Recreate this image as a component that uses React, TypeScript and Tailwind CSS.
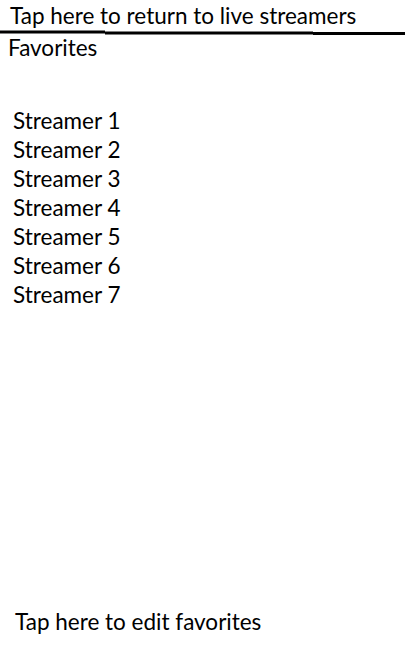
const streamers = [1, 2, 3, 4, 5, 6, 7];

export default function App() {
  return (
    <div className="h-[655px] w-[405px] bg-white text-black flex flex-col" style={{ fontFamily: "Lato, 'Open Sans', sans-serif" }}>
      <div className="pl-[10px] pt-[2px] text-[22.5px] leading-[28px]">Tap here to return to live streamers</div>
      {/* hand-drawn divider, slightly sloped */}
      <svg className="block mt-[0px]" width="405" height="5" viewBox="0 0 405 5">
        <polygon points="0,0.5 105,0.5 105,1.5 313,1.5 313,2 405,2 405,5 313,5 313,4.5 105,4.5 105,3.5 0,3.5" fill="black" />
      </svg>
      <div className="pl-[8px] text-[22.5px] leading-[26px]">Favorites</div>

      <ul className="pl-[13px] mt-[45px] text-[22.5px] leading-[29px]">
        {streamers.map((n) => (
          <li key={n}>Streamer {n}</li>
        ))}
      </ul>

      <div className="mt-auto pl-[15px] pb-[19px] text-[22.5px] leading-[28px]">Tap here to edit favorites</div>
    </div>
  );
}
